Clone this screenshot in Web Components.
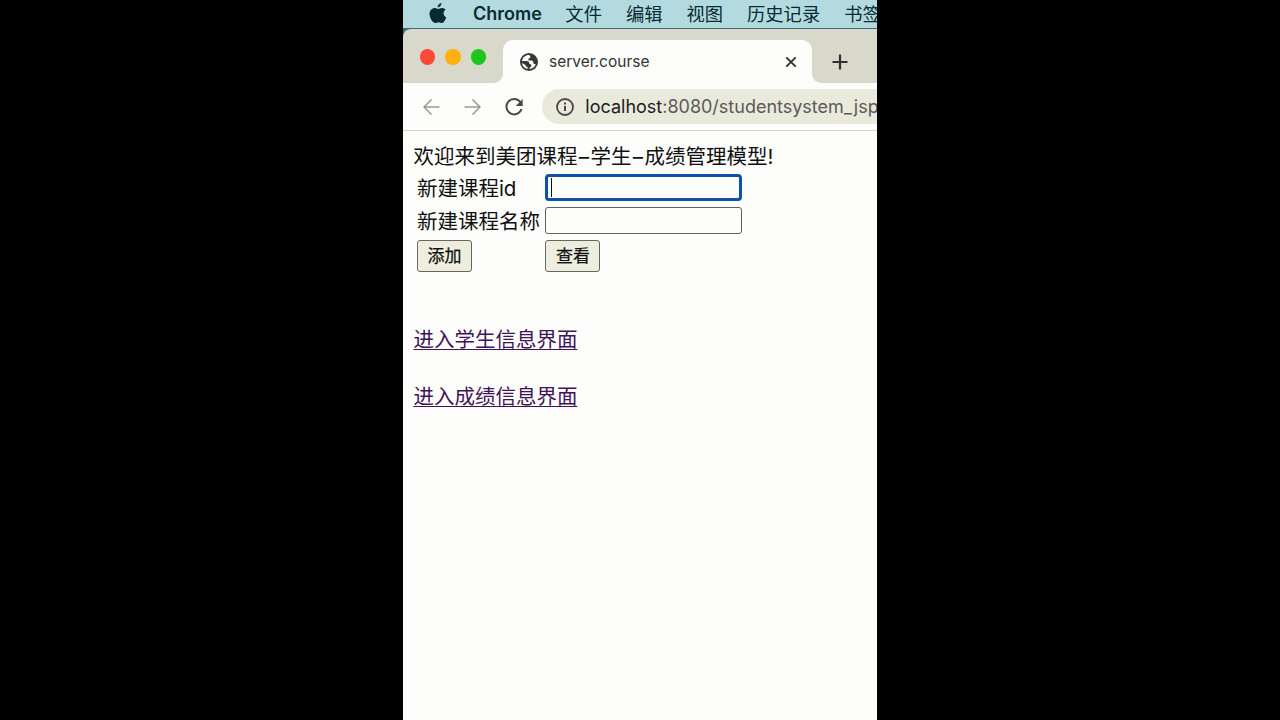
<!DOCTYPE html>
<html lang="zh-CN"><head><meta charset="utf-8"><title>server.course</title>
<style>
html,body{margin:0;background:#000;height:100%;overflow:hidden}
body{font-family:Inter,"Noto Sans CJK SC",sans-serif;display:flex;justify-content:center}
</style></head><body>
<desktop-screen></desktop-screen>
<script>
const define=(name,html)=>customElements.define(name,class extends HTMLElement{
  constructor(){super();const t=document.createElement('template');t.innerHTML=html;
  this.attachShadow({mode:'open'}).append(t.content.cloneNode(true));}
});
define('menu-bar',`<style>
:host{display:flex;height:28px;box-sizing:border-box;align-items:center;background:#b3dadf;color:#082b32;padding:0 0 0 26px;white-space:nowrap;font-size:18.300px;line-height:28px;overflow:hidden;flex:none}
svg{width:18px;height:22px;margin-right:26px;flex:none;margin-top:-2px}
b{font-weight:600;width:70px;margin-right:23.500px;font-size:18px}
span{margin-right:24px;flex:none}
</style>
<svg viewBox="0 0 18 22"><path fill="#082b32" d="M12.500 1c.1 2.200-1.800 4.400-3.800 4.300C8.500 3.200 10.400 1.200 12.500 1zM9.200 6.900c.8 0 2-1 3.900-1 1.700.1 2.900.8 3.600 1.900-3.200 2-2.600 6.200.6 7.500-.8 2.300-2.500 5.700-4.300 5.700-1.300 0-1.800-.8-3.400-.8s-2.200.8-3.400.8C3.700 21 .5 15.700.5 12c0-3.700 2.800-6 5.300-6 1.500 0 2.600.9 3.400.9z"/></svg>
<b>Chrome</b><span>文件</span><span>编辑</span><span>视图</span><span>历史记录</span><span>书签</span>`);
define('traffic-lights',`<style>
:host{display:flex;gap:10px;padding:20px 0 0 16.500px;width:83px;box-sizing:border-box;flex:none}
i{width:15.600px;height:15.600px;border-radius:50%;flex:none}
</style><i style="background:#fb4a3a"></i><i style="background:#fdb00e"></i><i style="background:#1dc51d"></i>`);
define('tab-strip',`<style>
:host{display:flex;height:54px;background:#d8d8cb;flex:none;border-radius:8px 0 0 0}
.tab{width:309px;margin:11px 0 0 17px;height:43px;background:#fdfdfb;border-radius:10px 10px 0 0;display:flex;align-items:center;box-sizing:border-box;padding:0 0 0 17px;position:relative;flex:none;font-size:15.500px;color:#333}
.tab:before,.tab:after{content:"";position:absolute;bottom:0;width:9px;height:9px}
.tab:before{left:-9px;background:radial-gradient(circle at 0 0,transparent 8.500px,#fdfdfb 9px)}
.tab:after{right:-9px;background:radial-gradient(circle at 100% 0,transparent 8.500px,#fdfdfb 9px)}
.globe{width:18px;height:18px;margin-right:11px}
.x{width:12px;height:12px;margin-left:auto;margin-right:15px}
.plus{width:16px;height:16px;margin:25px 0 0 20px}
</style>
<traffic-lights></traffic-lights>
<div class="tab"><svg class="globe" viewBox="0 0 18 18"><circle cx="9" cy="9" r="9" fill="#383838"/><path fill="#fdfdfb" d="M9.500 2C5.500 1.800 2.500 4.500 2 8h4.500c1.700 0 2.700.8 2.700 2 0 1.100.9 1.400 2 1.400v1.800c0 .9-.7 1.200-1.700 1.200v1.500c3-.1 5.500-2 6.300-4.900-1.700.3-2.600-.2-2.600-1.700 0-1.300-.9-1.900-2.400-1.900H8.500V5.500c1.300 0 1.900-.6 1.900-1.700z"/><path fill="#fdfdfb" d="M2 10c.3 3.200 2.600 5.500 5.500 6v-2.200c-1.300 0-2-.7-2-1.900z"/></svg><span>server.course</span>
<svg class="x" viewBox="0 0 12 12"><path d="m1.300 1.300 9.400 9.400m0-9.400-9.400 9.400" stroke="#303030" stroke-width="1.900"/></svg></div>
<svg class="plus" viewBox="0 0 16 16"><path d="M8 .5v15M.5 8h15" stroke="#303030" stroke-width="2.200"/></svg>`);
define('address-bar',`<style>
:host{display:flex;height:48px;box-sizing:border-box;border-bottom:1px solid #d2d2c8;background:#fdfdfb;padding:6px 0 0 17px;flex:none}
svg{width:22px;height:22px;flex:none}
.nav{display:flex;gap:19.500px;padding-top:6.500px;width:122px;flex:none}
.url{height:35px;width:360px;background:#e9e9dc;border-radius:18px 0 0 18px;display:flex;align-items:center;box-sizing:border-box;padding-left:12px;font-size:18px;white-space:nowrap;color:#5b5b58;flex:none}
.url svg{margin-right:9.300px}em{font-style:normal;color:#202020}
</style>
<div class="nav"><svg viewBox="0 0 22 22"><path d="M19.500 11H4m7.500-7.500L4 11l7.500 7.500" fill="none" stroke="#999" stroke-width="1.500"/></svg>
<svg viewBox="0 0 22 22"><path d="M2.500 11H18m-7.500-7.500L18 11l-7.500 7.500" fill="none" stroke="#999" stroke-width="1.500"/></svg>
<svg viewBox="0 0 22 22"><path d="M17.300 6A7.700 7.700 0 1 0 18.500 13" fill="none" stroke="#484848" stroke-width="2"/><path d="M19.700 3v7h-7z" fill="#484848"/></svg></div>
<div class="url"><svg viewBox="0 0 22 22"><circle cx="11" cy="11" r="8" fill="none" stroke="#484848" stroke-width="1.800"/><path d="M11 10v5M11 6.500v2" stroke="#484848" stroke-width="2"/></svg><span><em>localhost</em>:8080/studentsystem_jsp</span></div>`);
define('text-field',`<style>
:host{display:flex;width:197px;height:27px;box-sizing:border-box;border:1px solid #606060;border-radius:3px;background:#fdfdfb;align-items:center}
:host([focused]){border:3px solid #0b52a8;border-radius:4px}
i{display:none;width:1px;height:19px;background:#111;margin-left:2.500px}
:host([focused]) i{display:block}
</style><i></i>`);
define('push-button',`<style>
:host{display:flex;width:55px;height:32px;box-sizing:border-box;border:1px solid #676761;border-radius:3px;background:#eeeedf;align-items:center;justify-content:center;font-size:17px;line-height:24px;-webkit-text-stroke:.25px}
</style><slot></slot>`);
define('page-link',`<style>
:host{display:block;line-height:30px}a{color:#401457;text-decoration:underline;text-decoration-thickness:1.300px;text-underline-offset:2px}
</style><a href="#"><slot></slot></a>`);
define('course-form',`<style>
:host{display:grid;grid-template-columns:128.500px 197px;grid-template-rows:27px 27px 32px;row-gap:6px;padding:3px 0 0 3.500px;align-items:center;line-height:27px}
span{padding-top:2px}
</style><span>新建课程id</span><text-field focused></text-field><span>新建课程名称</span><text-field></text-field><push-button>添加</push-button><push-button>查看</push-button>`);
define('course-page',`<style>
:host{display:block;flex:1;background:#fdfdfb;padding:11px 0 0 10.400px;font-size:20.500px;color:#101010;white-space:nowrap}
.welcome{line-height:29px}
.dash{display:inline-block;width:13px;text-align:center}
page-link{margin-top:26.500px}page-link.first{margin-top:53px}
</style><div class="welcome">欢迎来到美团课程<span class="dash">–</span>学生<span class="dash">–</span>成绩管理模型!</div><course-form></course-form>
<page-link class="first">进入学生信息界面</page-link><page-link>进入成绩信息界面</page-link>`);
define('desktop-screen',`<style>
:host{display:flex;flex-direction:column;width:474px;height:720px;overflow:hidden;background:#416c75}
.window{display:flex;flex-direction:column;flex:1;margin-top:1px}
</style><menu-bar></menu-bar><div class="window"><tab-strip></tab-strip><address-bar></address-bar><course-page></course-page></div>`);
</script></body></html>
